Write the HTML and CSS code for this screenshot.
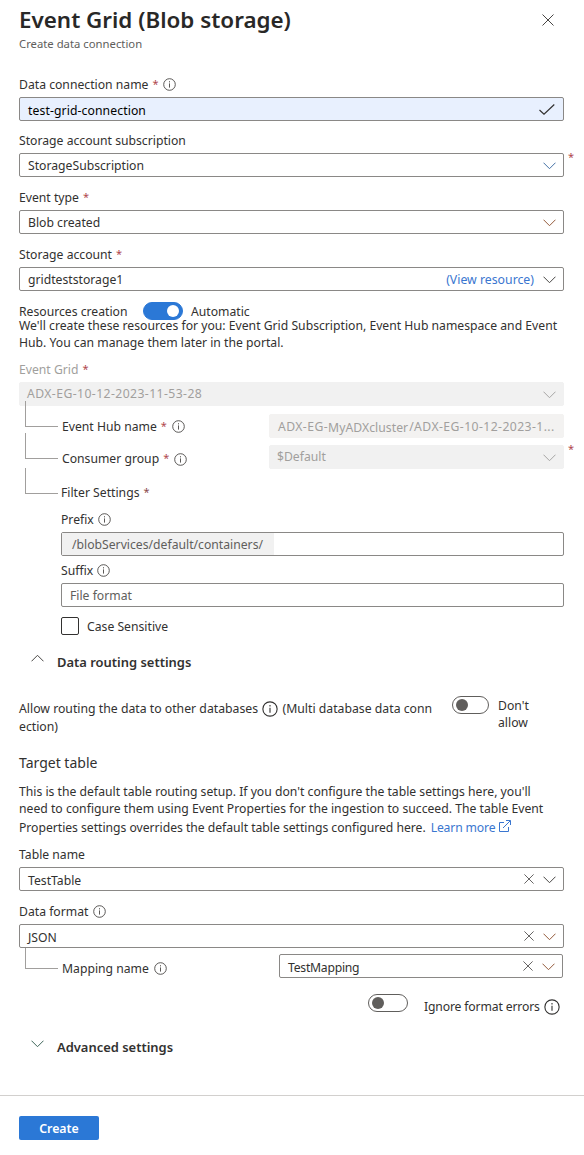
FILE: index.html
```html
<!DOCTYPE html>
<html lang="en">
<head>
<meta charset="utf-8">
<title>Create data connection</title>
<link rel="stylesheet" href="styles.css">
</head>
<body>
<svg class="defs" aria-hidden="true">
  <symbol id="info" viewBox="0 0 13 13"><circle cx="6.5" cy="6.5" r="5.8" fill="none" stroke="currentColor" stroke-width=".9"/><path d="M6.5 5.4V9.6M6.5 3.2V4.4" stroke="currentColor" stroke-width=".9"/></symbol>
  <symbol id="down" viewBox="0 0 13 8"><path d="M.5 .7L6.5 6.7L12.5 .7" fill="none" stroke="currentColor"/></symbol>
  <symbol id="up" viewBox="0 0 13 8"><path d="M.5 7.3L6.5 1.3L12.5 7.3" fill="none" stroke="currentColor"/></symbol>
  <symbol id="cross" viewBox="0 0 12 12"><path d="M.5 .5L11.5 11.5M11.5 .5L.5 11.5" fill="none" stroke="currentColor"/></symbol>
</svg>
<main class="panel">
  <header class="head">
    <h1 class="title">Event Grid (Blob storage)</h1>
    <svg class="close"><use href="#cross"/></svg>
  </header>
  <div class="subtitle">Create data connection</div>

  <section class="field first">
    <div class="label">Data connection name <b class="req">*</b> <svg class="info"><use href="#info"/></svg></div>
    <div class="box filled low"><span class="val loose">test-grid-connection</span><svg class="check" viewBox="0 0 16 11"><path d="M.5 6L5 10.2L15.3 .5" fill="none" stroke="currentColor" stroke-width="1.2"/></svg></div>
  </section>
  <section class="field sub">
    <div class="label">Storage account subscription</div>
    <div class="box"><span class="val">StorageSubscription</span><svg class="chev blue"><use href="#down"/></svg><b class="req outside">*</b></div>
  </section>
  <section class="field">
    <div class="label">Event type <b class="req">*</b></div>
    <div class="box"><span class="val">Blob created</span><svg class="chev rust"><use href="#down"/></svg></div>
  </section>
  <section class="field">
    <div class="label">Storage account <b class="req">*</b></div>
    <div class="box"><span class="val">gridteststorage1</span><a class="link view">(View resource)</a><svg class="chev"><use href="#down"/></svg></div>
  </section>

  <div class="creation"><span class="creation-name">Resources creation</span><span class="toggle on"><i class="knob"></i></span><span>Automatic</span></div>
  <p class="note">We'll create these resources for you: Event Grid Subscription, Event Hub namespace and Event<br>Hub. You can manage them later in the portal.</p>

  <section class="field grid">
    <div class="label muted">Event Grid <b class="req">*</b></div>
    <div class="box disabled high"><span class="val wide">ADX-EG-10-12-2023-11-53-28</span><svg class="chev"><use href="#down"/></svg></div>
  </section>

  <div class="branch hub">
    <i class="elbow"></i>
    <div class="label">Event Hub name <b class="req">*</b> <svg class="info"><use href="#info"/></svg></div>
    <div class="box disabled warm"><span class="val resource">ADX-EG-<span class="cluster">MyADXcluster</span>/ADX-EG-10-12-2023-1...</span></div>
  </div>
  <div class="branch consumer">
    <i class="elbow"></i>
    <div class="label">Consumer group <b class="req">*</b> <svg class="info drop"><use href="#info"/></svg></div>
    <div class="box disabled high"><span class="val">$Default</span><svg class="chev"><use href="#down"/></svg><b class="req outside">*</b></div>
  </div>
  <div class="branch filter"><i class="elbow"></i><div class="label">Filter Settings <b class="req">*</b></div></div>

  <div class="filters">
    <div class="label">Prefix <svg class="info tight"><use href="#info"/></svg></div>
    <div class="box"><span class="prefix">/blobServices/default/containers/</span></div>
    <div class="label suffix">Suffix <svg class="info tight"><use href="#info"/></svg></div>
    <div class="box"><span class="val hint">File format</span></div>
    <div class="case"><i class="checkbox"></i><span>Case Sensitive</span></div>
  </div>

  <div class="accordion routing"><svg class="chev"><use href="#up"/></svg><h2 class="h2">Data routing settings</h2></div>

  <div class="allow">
    <div class="allow-text">Allow routing the data to other databases <svg class="info big"><use href="#info"/></svg> (Multi database data conn<br>ection)</div>
    <span class="toggle narrow"><i class="knob"></i></span>
    <div class="allow-state">Don't<br>allow</div>
  </div>

  <h3 class="h3">Target table</h3>
  <p class="para">This is the default table routing setup. If you don't configure the table settings here, you'll<br>need to configure them using Event Properties for the ingestion to succeed. The table Event<span class="last"><span class="tail">Properties settings overrides the default table settings configured here.</span><a class="link learn">Learn more</a><svg class="ext" viewBox="0 0 12 12"><path d="M5 2.5H.5V11.5H9.5V7M4 8L11.3 .7M7 .5H11.5V5" fill="none" stroke="currentColor"/></svg></span></p>

  <section class="field table">
    <div class="label">Table name</div>
    <div class="box low"><span class="val">TestTable</span><svg class="clear"><use href="#cross"/></svg><svg class="chev"><use href="#down"/></svg></div>
  </section>
  <section class="field">
    <div class="label">Data format <svg class="info"><use href="#info"/></svg></div>
    <div class="box low"><span class="val">JSON</span><svg class="clear"><use href="#cross"/></svg><svg class="chev rust"><use href="#down"/></svg></div>
  </section>
  <div class="branch mapping">
    <i class="elbow"></i>
    <div class="label">Mapping name <svg class="info"><use href="#info"/></svg></div>
    <div class="box low"><span class="val compact">TestMapping</span><svg class="clear"><use href="#cross"/></svg><svg class="chev rust"><use href="#down"/></svg></div>
  </div>
  <div class="ignore"><span class="toggle"><i class="knob"></i></span><div class="ignore-text">Ignore format errors<svg class="info big"><use href="#info"/></svg></div></div>

  <div class="accordion advanced"><svg class="chev green"><use href="#down"/></svg><h2 class="h2">Advanced settings</h2></div>
</main>
<footer class="foot"><button class="create">Create</button></footer>
</body>
</html>
```

FILE: styles.css
```css
* { box-sizing: border-box; }
body { margin: 0; height: 1155px; overflow: hidden; background: #fff; color: #323130; font-family: "Noto Sans", "Open Sans", sans-serif; font-size: 12.2px; line-height: 18px; white-space: nowrap; }
h1, h2, h3, p { margin: 0; }
svg { display: block; flex: none; }
.defs { position: absolute; width: 0; height: 0; }
.panel { height: 1095px; padding: 0 20px 0 19px; }

.head { display: flex; justify-content: space-between; height: 36px; padding-right: 10px; }
.title { color: #292827; font-size: 22.4px; line-height: 39px; font-weight: 600; }
.close { width: 12px; height: 12px; margin-top: 14px; color: #484644; }
.subtitle { height: 16px; line-height: 16px; font-size: 11.3px; color: #605e5c; }

.field { margin-top: 11px; }
.field.first { margin-top: 23px; }
.field.sub { margin-top: 10px; }
.field.grid { margin-top: 9px; }
.field.table { margin-top: 7px; }
.label { display: flex; align-items: center; height: 18px; margin-bottom: 4px; padding-top: 2px; }
.muted { color: #a19f9d; }
.req { margin: -2px 0 0 4px; color: #b0474d; font-size: 11px; font-weight: 400; }
.filter .req { color: #8a4a4c; }
.info { width: 13px; height: 13px; margin: -2px 0 0 5px; color: #484644; }
.info.tight { margin-left: 4px; }
.info.drop { position: relative; top: 1px; }
.info.big { display: inline-block; width: 16px; height: 16px; margin: 0 1px; vertical-align: -4px; color: #323130; }

.box { position: relative; display: flex; align-items: center; height: 24px; padding: 0 7px 0 8px; border: 1px solid #8a8886; border-radius: 2px; background: #fff; line-height: 24px; }
.filled { background: #e8f0fe; color: #000; }
.val { flex: 1; height: 22px; }
.high .val { margin-left: -1px; line-height: 22px; }
.low .val { line-height: 26px; }
.loose { letter-spacing: .1px; }
.wide { letter-spacing: .42px; }
.resource { letter-spacing: .42px; }
.compact { letter-spacing: -.25px; }
.disabled { border-color: #f1f1f1; background: #f1f1f1; color: #a19f9d; }
.warm { border-color: #f3f2f1; background: #f3f2f1; }
.hint { color: #605e5c; }
.chev { width: 13px; height: 8px; color: #484644; }
.box .chev { margin-top: 1px; }
.disabled .chev { color: #a6a5a4; }
.box .blue { color: #4470a5; }
.box .rust { color: #945b3c; }
.green { color: #3f665a; }
.check { width: 16px; height: 11px; margin-right: 1px; color: #323130; }
.clear { width: 10px; height: 10px; margin-right: 9px; color: #484644; }
.outside { position: absolute; right: -11px; top: -7px; }
.link { color: #3a76d0; }
.view { height: 22px; margin-right: 9px; font-size: 12.3px; }

.creation { display: flex; height: 18px; margin-top: 11px; line-height: 20px; }
.creation-name { width: 124px; }
.toggle { display: flex; align-items: center; flex: none; width: 40px; height: 18px; padding-left: 3px; border: 1px solid #605e5c; border-radius: 9px; }
.toggle.on { justify-content: flex-end; margin-right: 8px; padding: 0 3px 0 0; border-color: #2b78d6; background: #2b78d6; }
.toggle.narrow { width: 37px; margin-top: -3px; }
.knob { width: 12px; height: 12px; border-radius: 50%; background: #605e5c; }
.on .knob { background: #fff; }
.note { margin-top: -3px; line-height: 17px; }

.branch { position: relative; display: grid; grid-template-columns: 208px 295px; padding-left: 42px; align-items: center; height: 24px; }
.branch .label { margin: 0; padding-left: 1px; }
.branch.hub { margin-top: 8px; }
.branch.consumer { margin-top: 7px; }
.consumer .label { position: relative; top: 1px; }
.branch.filter { height: 18px; margin-top: 14px; }
.branch.filter .label { padding-left: 0; }
.branch.mapping { grid-template-columns: 218px 284px; margin-top: 6px; }
.mapping .label { position: relative; top: 2px; }
.elbow { position: absolute; z-index: 1; left: 6px; top: -13px; width: 33px; height: 26px; border: solid #a19f9d; border-width: 0 0 1px 1px; }
.consumer .elbow { top: -12px; }
.filter .elbow { top: -15px; }
.mapping .elbow { top: -6px; height: 21px; }
.cluster { position: relative; top: 1px; margin-right: 1px; letter-spacing: .05px; }

.filters { margin: 9px 0 0 42px; }
.filters .suffix { margin-top: 5px; }
.filters .box:has(.prefix) { padding-left: 0; }
.prefix { width: 212px; height: 22px; padding-left: 10px; background: #f1f1f1; color: #605e5c; }
.case { display: flex; gap: 8px; height: 18px; margin-top: 10px; line-height: 20px; }
.checkbox { width: 18px; height: 18px; border: 1px solid #323130; border-radius: 2px; }

.accordion { display: flex; height: 18px; padding-left: 12px; gap: 13px; }
.routing { margin-top: 18px; }
.routing .chev { margin-top: 1px; }
.advanced { margin-top: 26px; }
.advanced .chev { margin-top: 2px; }
.h2 { font-size: 12.95px; line-height: 18px; font-weight: 600; }
.allow { display: flex; height: 36px; margin-top: 28px; }
.allow-text { width: 433px; padding-top: 1px; font-size: 12.25px; }
.allow-state { margin: -2px 0 0 9px; line-height: 17px; }
.h3 { margin-top: 18px; font-size: 14px; line-height: 20px; font-weight: 400; }
.para { height: 55px; margin-top: 10px; line-height: 17px; }
.last { display: flex; line-height: 21px; }
.tail { letter-spacing: -.03px; }
.learn { margin-left: 5px; letter-spacing: -.15px; }
.ext { width: 12px; height: 12px; margin: 3px 0 0 4px; color: #3a76d0; }
.ignore { display: flex; height: 18px; margin: 16px 0 0 349px; }
.ignore-text { margin: 4px 0 0 16px; letter-spacing: -.15px; }
.ignore-text .info { margin-left: 4px; }

.foot { height: 60px; padding: 20px 0 0 19px; border-top: 1px solid #d2d0ce; }
.create { display: block; width: 80px; height: 24px; padding: 0; border: 0; border-radius: 2px; background: #2b78d6; color: #fff; font: 600 12.3px/25px "Noto Sans", sans-serif; }
```
